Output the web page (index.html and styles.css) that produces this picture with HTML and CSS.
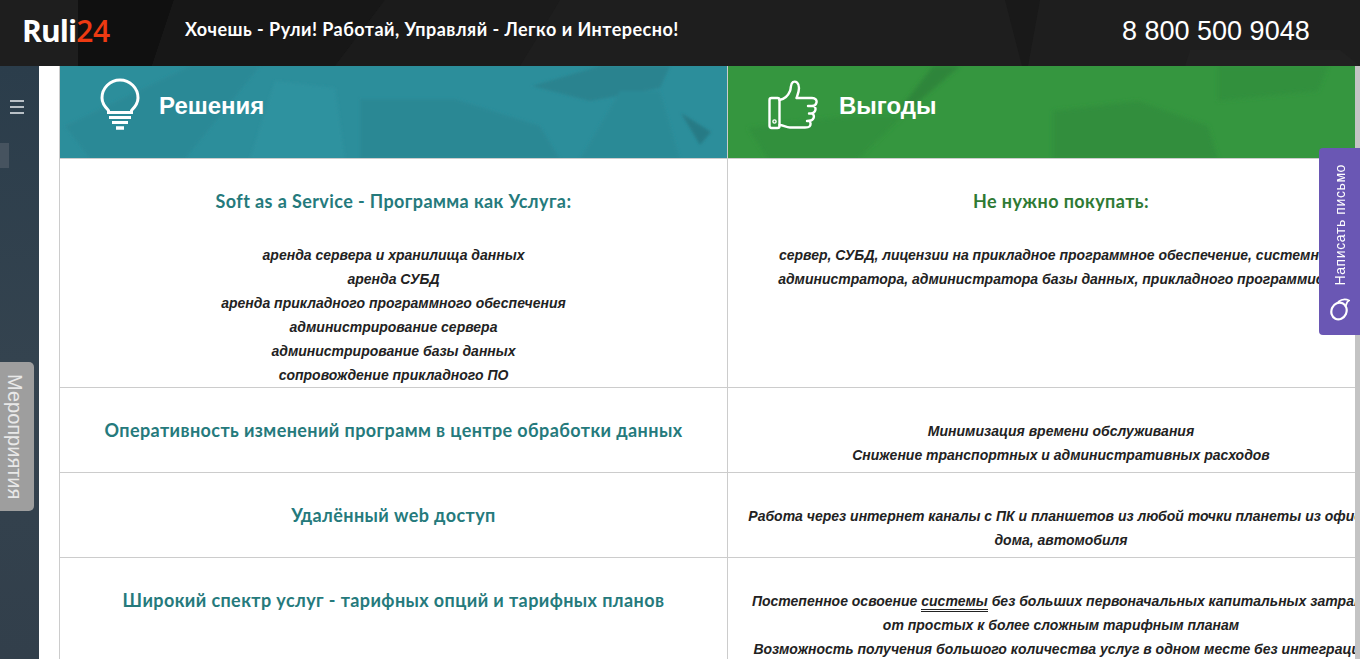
FILE: index.html
```html
<!DOCTYPE html>
<html lang="ru">
<head>
<meta charset="utf-8">
<title>Ruli24</title>
<link rel="stylesheet" href="styles.css">
</head>
<body>
<header class="top">
  <a class="logo">Ruli<span class="logo-num">24</span></a>
  <div class="slogan">Хочешь - Рули! Работай, Управляй - Легко и Интересно!</div>
  <div class="phone">8 800 500 9048</div>
</header>
<div class="body-row">
  <aside class="side">
    <div class="burger"><i></i><i></i><i></i></div>
    <div class="side-item"></div>
    <div class="events">Мероприятия</div>
  </aside>
  <main class="main">
    <div class="table">
      <div class="hcell teal">
        <svg class="ico-bulb" width="40" height="54" viewBox="0 0 40 54" fill="none" stroke="#fff">
          <path d="M8.5 32.5C4 28 2 25 2 20A18 18 0 0 1 38 20C38 25 36 28 31.500 32.500" stroke-width="3" stroke-linecap="round"/>
          <path d="M7 34.500H33M9 39.500H31M12 44.500H28" stroke-width="3"/>
          <path d="M16 50H24" stroke-width="3.500"/>
        </svg>
        <span class="htitle">Решения</span>
      </div>
      <div class="hcell green">
        <svg class="ico-thumb" width="50" height="50" viewBox="0 0 50 50" fill="none" stroke="#fff" stroke-width="2.400" stroke-linejoin="round" stroke-linecap="round">
          <rect x="1.500" y="18" width="10" height="30" rx="2"/>
          <circle cx="6.500" cy="41.500" r="1.600" stroke-width="1.400"/>
          <path d="M11.500 20C17 19 20 16 22 11C23.500 7 22 4 25 2C28 0.800 31 3 31 8C31 12 29.500 15 28.500 18H44C47.500 18 49 20 48.500 22.500C48 25 46 26 44 26H40H45C47.500 26 48 29 47 31C46 33 44 33.500 41 33.500H44C46 34 46.500 37 45 39C44 40.500 42 41 39 41H41C43 42 43 45 41.500 46.500C40.500 47.500 39 47.500 37 47.500H22C18 47.500 15 45 11.500 45"/>
        </svg>
        <span class="htitle">Выгоды</span>
      </div>

      <div class="cell row1">
        <h3 class="ctitle teal-t">Soft as a Service - Программа как Услуга:</h3>
        <p class="desc lead">аренда сервера и хранилища данных<br>аренда СУБД<br>аренда прикладного программного обеспечения<br>администрирование сервера<br>администрирование базы данных<br>сопровождение прикладного ПО</p>
      </div>
      <div class="cell row1">
        <h3 class="ctitle green-t">Не нужно покупать:</h3>
        <p class="desc lead">сервер, СУБД, лицензии на прикладное программное обеспечение, системного<br>администратора, администратора базы данных, прикладного программиста</p>
      </div>

      <div class="cell row2">
        <h3 class="ctitle teal-t">Оперативность изменений программ в центре обработки данных</h3>
      </div>
      <div class="cell row2">
        <p class="desc">Минимизация времени обслуживания<br>Снижение транспортных и административных расходов</p>
      </div>

      <div class="cell row2">
        <h3 class="ctitle teal-t">Удалённый web доступ</h3>
      </div>
      <div class="cell row2">
        <p class="desc">Работа через интернет каналы с ПК и планшетов из любой точки планеты из офиса,<br>дома, автомобиля</p>
      </div>

      <div class="cell row4">
        <h3 class="ctitle teal-t">Широкий спектр услуг - тарифных опций и тарифных планов</h3>
      </div>
      <div class="cell row4">
        <p class="desc">Постепенное освоение <span class="term">системы</span> без больших первоначальных капитальных затрат,<br>от простых к более сложным тарифным планам<br>Возможность получения большого количества услуг в одном месте без интеграции</p>
      </div>
    </div>
  </main>
  <div class="scrollbar"></div>
</div>
<div class="mail-tab">
  <span class="mail-text">Написать письмо</span>
  <svg class="mail-ico" width="20" height="24" viewBox="0 0 20 24" fill="none" stroke="#fff" stroke-width="2.200">
    <ellipse cx="9" cy="14" rx="7.500" ry="8.500" transform="rotate(25 9 14)"/>
    <path d="M8 5C12 2 16 2 19 3.500C16.500 4.500 16.500 7 15.500 10" stroke-width="1.800"/>
  </svg>
</div>
</body>
</html>
```
FILE: styles.css
```css
* { box-sizing: border-box; }
html, body { margin: 0; height: 100%; overflow: hidden; }
body { font-family: "Liberation Sans", Arial, sans-serif; background: #fff; width: 1360px; height: 659px; }

.top {
  height: 66px;
  display: flex;
  align-items: flex-start;
  color: #fff;
  background-color: #1e1e1e;
  background-image: url("data:image/svg+xml,%3Csvg xmlns='http://www.w3.org/2000/svg' width='1360' height='66'%3E%3Cpolygon points='78,0 174,0 152,66 78,66' fill='%23101010'/%3E%3Cpolygon points='174,0 385,0 335,66 152,66' fill='%23171717'/%3E%3Cpolygon points='1005,0 1040,0 1028,66 1022,66' fill='%23191919'/%3E%3Cpolygon points='385,0 560,0 520,66 335,66' fill='%231b1b1b'/%3E%3Cpolygon points='1190,50 1340,50 1360,66 1185,66' fill='%23212121'/%3E%3C/svg%3E");
}
.logo {
  width: 185px;
  padding: 14px 0 0 22px;
  font: 700 30px/34px "Open Sans", sans-serif;
  letter-spacing: -.9px;
  flex: none;
}
.logo-num { color: #ee3a12; font-weight: 600; letter-spacing: -.3px; }
.slogan {
  width: 937px;
  flex: none;
  padding-top: 17px;
  font: 700 18px/24px Lato, "Open Sans", sans-serif;
  letter-spacing: .46px;
}
.phone {
  padding-top: 13px;
  font: 400 27px/36px "Liberation Sans", sans-serif;
}

.body-row { display: flex; height: 593px; }
.side {
  width: 39px;
  flex: none;
  position: relative;
  background: linear-gradient(180deg, #2b3d4b 0, #34434f 50%, #323f4b 100%);
  padding-top: 34px;
}
.burger { display: flex; flex-direction: column; gap: 4px; padding-left: 10px; }
.burger i { display: block; width: 14px; height: 2px; background: #b9c0c6; }
.side-item { width: 9px; height: 25px; margin-top: 29px; background: #46535f; }
.events {
  position: absolute;
  left: 0;
  top: 296px;
  width: 34px;
  height: 149px;
  padding-right: 4px;
  background: #9e9e9e;
  border-radius: 0 5px 5px 0;
  color: #e8e8e8;
  font-size: 20px;
  line-height: 30px;
  text-align: center;
  writing-mode: vertical-rl;
}

.main { width: 1316px; flex: none; overflow: hidden; padding-left: 20px; background: #fff; }
.scrollbar { width: 5px; flex: none; background: #c4c4c4; }
.table { display: grid; grid-template-columns: 668px 667px; width: 1335px; }

.hcell {
  height: 93px;
  display: flex;
  align-items: center;
  padding: 0 0 13px 40px;
  color: #fff;
  border-bottom: 1px solid #ccc;
  border-left: 1px solid #ccc;
}
.teal {
  background-color: #2c8e9b;
  background-image: url("data:image/svg+xml,%3Csvg xmlns='http://www.w3.org/2000/svg' width='668' height='93'%3E%3Cfilter id='b'%3E%3CfeGaussianBlur stdDeviation='1.500'/%3E%3C/filter%3E%3Cg filter='url(%23b)'%3E%3Cpolygon points='5,60 130,0 200,0 125,93 30,93' fill='%232a8996'/%3E%3Cpolygon points='215,15 275,22 285,93 190,93' fill='%232e929f'/%3E%3Cpolygon points='300,33 395,33 480,60 500,93 300,93' fill='%232a8894'/%3E%3Cpolygon points='472,20 540,0 610,0 600,22 530,35' fill='%2329838f'/%3E%3Cpolygon points='560,25 600,25 620,93 520,93' fill='%232a8a96'/%3E%3Cpolygon points='621,47 651,66 640,79' fill='%23267a85'/%3E%3C/g%3E%3C/svg%3E");
}
.green {
  background-color: #35963f;
  background-image: url("data:image/svg+xml,%3Csvg xmlns='http://www.w3.org/2000/svg' width='632' height='93'%3E%3Cfilter id='b'%3E%3CfeGaussianBlur stdDeviation='2'/%3E%3C/filter%3E%3Cg filter='url(%23b)'%3E%3Cpolygon points='20,62 120,50 175,50 130,93 40,93' fill='%2332903c'/%3E%3Cpolygon points='205,0 232,0 180,45 170,45' fill='%232f853a'/%3E%3Cpolygon points='325,45 410,35 480,60 490,93 325,93' fill='%23338e3c'/%3E%3Cpolygon points='490,0 600,0 590,25 490,35' fill='%2332903c'/%3E%3C/g%3E%3C/svg%3E");
}
.ico-bulb, .ico-thumb { flex: none; margin-top: -2px; }
.htitle { font-weight: 700; font-size: 24px; line-height: 30px; margin-left: 19px; }
.green .htitle { margin-left: 21px; }

.cell { border-left: 1px solid #ccc; border-bottom: 1px solid #ccc; text-align: center; }
.row1 { height: 229px; padding-top: 29px; }
.row2 { height: 85px; padding-top: 29px; }
.row4 { height: 110px; padding-top: 29px; }

.ctitle {
  margin: 0;
  font: 700 18px/26px Lato, "Open Sans", sans-serif;
  letter-spacing: .4px;
}
.teal-t { color: #257a7c; }
.green-t { color: #2f7a34; }
.desc {
  margin: 0;
  padding-top: 2px;
  font: italic 700 14px/24px "Liberation Sans", sans-serif;
  color: #222;
}
.desc.lead { margin-top: 29px; padding-top: 0; }
.term { border-bottom: 3px double #222; }

.mail-tab {
  position: absolute;
  left: 1319px;
  top: 148px;
  width: 41px;
  height: 187px;
  background: #6a57b4;
  border-radius: 4px 0 0 4px;
  color: #fff;
  display: flex;
  flex-direction: column;
  align-items: center;
  padding-top: 16px;
}
.mail-text {
  writing-mode: vertical-rl;
  transform: rotate(180deg);
  font-size: 14px;
  line-height: 18px;
  letter-spacing: .6px;
}
.mail-ico { margin-top: 12px; }
```
